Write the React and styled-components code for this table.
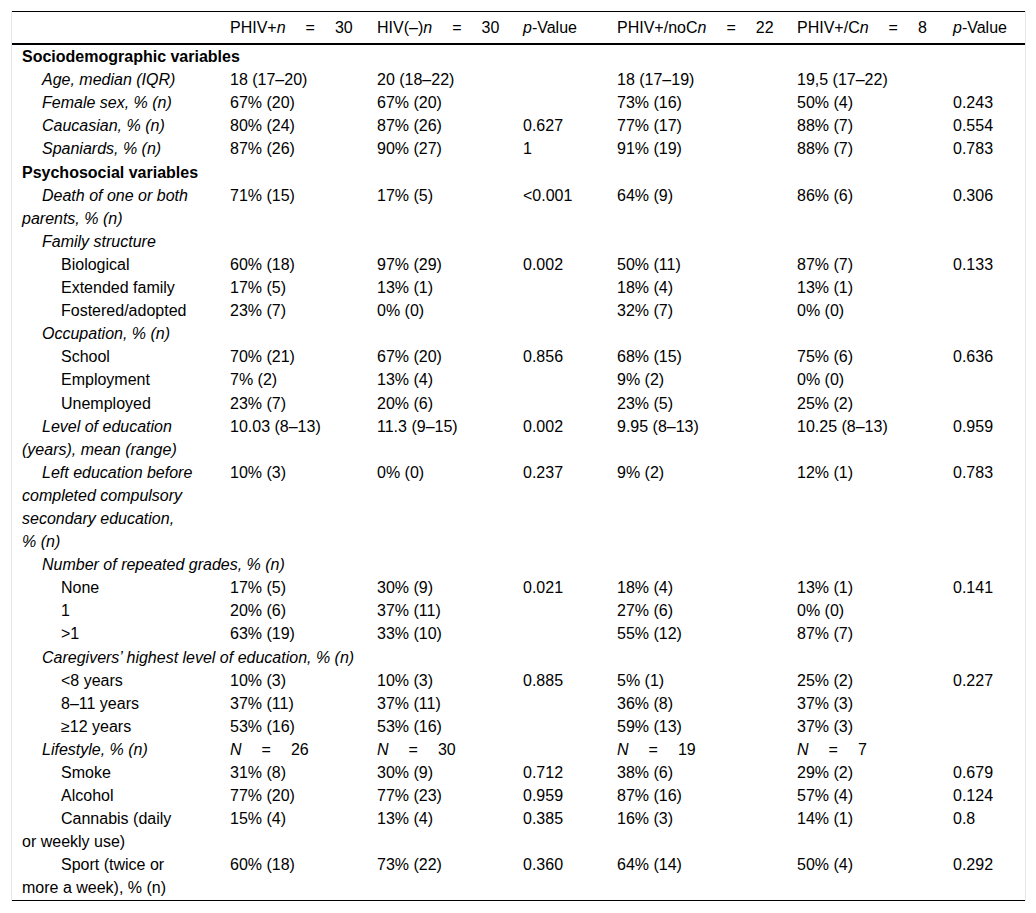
import React from "react";
import styled, { createGlobalStyle } from "styled-components";

const GlobalStyle = createGlobalStyle`
  body {
    margin: 0;
    background: #fff;
    font-family: "Liberation Sans", Arial, sans-serif;
    color: #000;
  }
`;

const Frame = styled.div`
  margin: 11px 0 0 11px;
  width: 1013px;
  border-left: 1px solid #e6e6e6;
  border-right: 1px solid #e6e6e6;
`;

const Table = styled.table`
  width: 100%;
  table-layout: fixed;
  border-collapse: separate;
  border-spacing: 0;
  border-top: 1px solid #000;
  border-bottom: 1px solid #000;
  font-size: 16px;
  line-height: 23.1px;
`;

const Th = styled.th`
  text-align: left;
  font-weight: normal;
  padding: 4px 0 4px 10px;
  border-bottom: 2px solid #000;
  white-space: nowrap;
  vertical-align: top;
`;

const Td = styled.td`
  padding: 0 0 0 10px;
  white-space: nowrap;
  vertical-align: top;
  overflow: visible;
`;

const Label = styled.td`
  padding: 0 0 0 10px;
  white-space: nowrap;
  vertical-align: top;
  text-indent: ${(p) => [0, 20, 39][p.level]}px;
  font-style: ${(p) => (p.level === 1 ? "italic" : "normal")};
  font-weight: ${(p) => (p.level === 0 ? "bold" : "normal")};
`;

const Eq = styled.span`
  margin: 0 20px;
`;

const I = styled.i``;

const Count = ({ pre, n }) => (
  <>
    {pre}
    <I>n</I>
    <Eq>=</Eq>
    {n}
  </>
);

const Big = ({ n }) => (
  <>
    <I>N</I>
    <Eq>=</Eq>
    {n}
  </>
);

const PValue = () => (
  <>
    <I>p</I>-Value
  </>
);

const widths = [208, 147, 146, 94, 180, 156, 82];

const rows = [
  { l: ["Sociodemographic variables"], v: 0, c: [] },
  { l: ["Age, median (IQR)"], v: 1, c: ["18 (17–20)", "20 (18–22)", "", "18 (17–19)", "19,5 (17–22)", ""] },
  { l: ["Female sex, % (n)"], v: 1, c: ["67% (20)", "67% (20)", "", "73% (16)", "50% (4)", "0.243"] },
  { l: ["Caucasian, % (n)"], v: 1, c: ["80% (24)", "87% (26)", "0.627", "77% (17)", "88% (7)", "0.554"] },
  { l: ["Spaniards, % (n)"], v: 1, c: ["87% (26)", "90% (27)", "1", "91% (19)", "88% (7)", "0.783"] },
  { l: ["Psychosocial variables"], v: 0, c: [] },
  { l: ["Death of one or both", "parents, % (n)"], v: 1, c: ["71% (15)", "17% (5)", "<0.001", "64% (9)", "86% (6)", "0.306"] },
  { l: ["Family structure"], v: 1, c: [] },
  { l: ["Biological"], v: 2, c: ["60% (18)", "97% (29)", "0.002", "50% (11)", "87% (7)", "0.133"] },
  { l: ["Extended family"], v: 2, c: ["17% (5)", "13% (1)", "", "18% (4)", "13% (1)", ""] },
  { l: ["Fostered/adopted"], v: 2, c: ["23% (7)", "0% (0)", "", "32% (7)", "0% (0)", ""] },
  { l: ["Occupation, % (n)"], v: 1, c: [] },
  { l: ["School"], v: 2, c: ["70% (21)", "67% (20)", "0.856", "68% (15)", "75% (6)", "0.636"] },
  { l: ["Employment"], v: 2, c: ["7% (2)", "13% (4)", "", "9% (2)", "0% (0)", ""] },
  { l: ["Unemployed"], v: 2, c: ["23% (7)", "20% (6)", "", "23% (5)", "25% (2)", ""] },
  { l: ["Level of education", "(years), mean (range)"], v: 1, c: ["10.03 (8–13)", "11.3 (9–15)", "0.002", "9.95 (8–13)", "10.25 (8–13)", "0.959"] },
  {
    l: ["Left education before", "completed compulsory", "secondary education,", "% (n)"],
    v: 1,
    c: ["10% (3)", "0% (0)", "0.237", "9% (2)", "12% (1)", "0.783"],
  },
  { l: ["Number of repeated grades, % (n)"], v: 1, c: [] },
  { l: ["None"], v: 2, c: ["17% (5)", "30% (9)", "0.021", "18% (4)", "13% (1)", "0.141"] },
  { l: ["1"], v: 2, c: ["20% (6)", "37% (11)", "", "27% (6)", "0% (0)", ""] },
  { l: [">1"], v: 2, c: ["63% (19)", "33% (10)", "", "55% (12)", "87% (7)", ""] },
  { l: ["Caregivers’ highest level of education, % (n)"], v: 1, c: [] },
  { l: ["<8 years"], v: 2, c: ["10% (3)", "10% (3)", "0.885", "5% (1)", "25% (2)", "0.227"] },
  { l: ["8–11 years"], v: 2, c: ["37% (11)", "37% (11)", "", "36% (8)", "37% (3)", ""] },
  { l: ["≥12 years"], v: 2, c: ["53% (16)", "53% (16)", "", "59% (13)", "37% (3)", ""] },
  {
    l: ["Lifestyle, % (n)"],
    v: 1,
    c: [<Big n="26" />, <Big n="30" />, "", <Big n="19" />, <Big n="7" />, ""],
  },
  { l: ["Smoke"], v: 2, c: ["31% (8)", "30% (9)", "0.712", "38% (6)", "29% (2)", "0.679"] },
  { l: ["Alcohol"], v: 2, c: ["77% (20)", "77% (23)", "0.959", "87% (16)", "57% (4)", "0.124"] },
  { l: ["Cannabis (daily", "or weekly use)"], v: 2, c: ["15% (4)", "13% (4)", "0.385", "16% (3)", "14% (1)", "0.8"] },
  { l: ["Sport (twice or", "more a week), % (n)"], v: 2, c: ["60% (18)", "73% (22)", "0.360", "64% (14)", "50% (4)", "0.292"] },
];

const App = () => (
  <>
    <GlobalStyle />
    <Frame>
      <Table>
        <colgroup>
          {widths.map((w, i) => (
            <col key={i} style={{ width: w }} />
          ))}
        </colgroup>
        <thead>
          <tr>
            <Th />
            <Th>
              <Count pre="PHIV+" n="30" />
            </Th>
            <Th>
              <Count pre="HIV(–)" n="30" />
            </Th>
            <Th>
              <PValue />
            </Th>
            <Th>
              <Count pre="PHIV+/noC" n="22" />
            </Th>
            <Th>
              <Count pre="PHIV+/C" n="8" />
            </Th>
            <Th>
              <PValue />
            </Th>
          </tr>
        </thead>
        <tbody>
          {rows.map((r, i) => (
            <tr key={i}>
              <Label level={r.v}>
                {r.l.map((line, j) => (
                  <React.Fragment key={j}>
                    {j > 0 && <br />}
                    {line}
                  </React.Fragment>
                ))}
              </Label>
              {[0, 1, 2, 3, 4, 5].map((k) => (
                <Td key={k}>{r.c[k] || ""}</Td>
              ))}
            </tr>
          ))}
        </tbody>
      </Table>
    </Frame>
  </>
);

export default App;
